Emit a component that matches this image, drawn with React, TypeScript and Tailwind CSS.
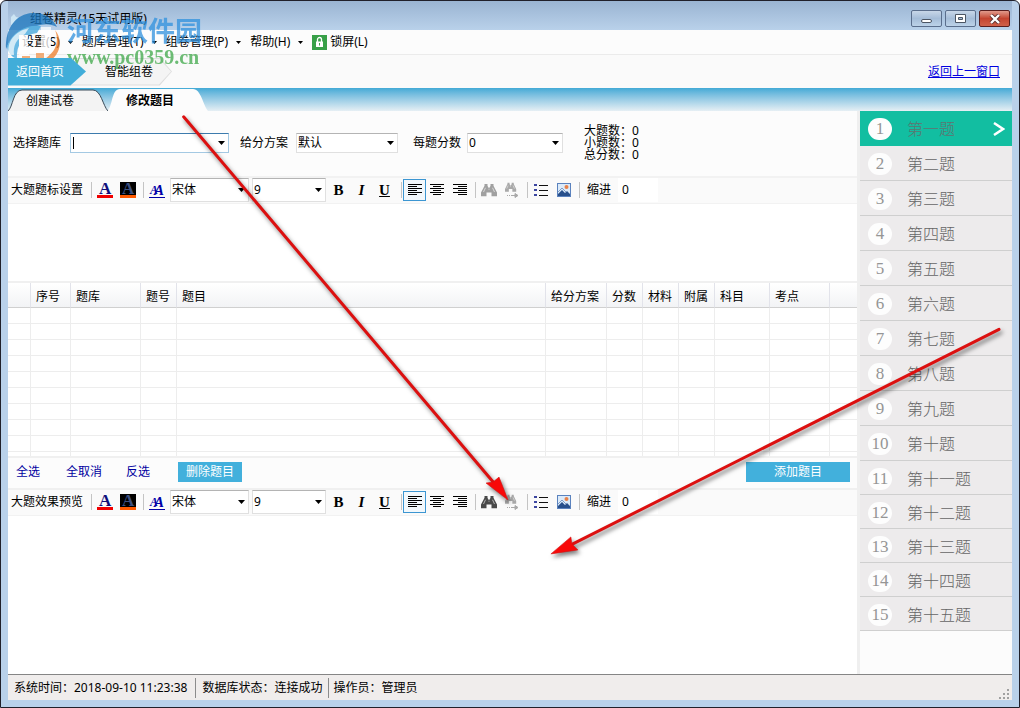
import React, { useState } from "react";

const CHAPTERS = ["一", "二", "三", "四", "五", "六", "七", "八", "九", "十", "十一", "十二", "十三", "十四", "十五"];

const MENUS = ["设置(S)", "题库管理(T)", "组卷管理(P)", "帮助(H)"];

const COLUMNS = [
  { title: "", width: "w-[23px]" },
  { title: "序号", width: "w-10" },
  { title: "题库", width: "w-[70px]" },
  { title: "题号", width: "w-9" },
  { title: "题目", width: "" },
  { title: "给分方案", width: "w-[61px]" },
  { title: "分数", width: "w-9" },
  { title: "材料", width: "w-9" },
  { title: "附属", width: "w-9" },
  { title: "科目", width: "w-[55px]" },
  { title: "考点", width: "w-[60px]" },
  { title: "", width: "w-[27px]" },
];

function Caret({ className = "" }: { className?: string }) {
  return (
    <svg viewBox="0 0 7 4" className={`h-1 w-[7px] shrink-0 ${className}`}>
      <path d="M0 0h7L3.5 4z" fill="#000" />
    </svg>
  );
}

function Dropdown({ label, options, className = "" }: { label: string; options: string[]; className?: string }) {
  return (
    <span className={`relative flex items-center ${className}`}>
      <select
        aria-label={label}
        className="h-full w-full appearance-none border border-t-[#b4b4b4] border-r-[#e0e0e0] border-b-[#e0e0e0] border-l-[#e0e0e0] bg-white pl-px outline-none"
      >
        {options.map((o) => (
          <option key={o}>{o}</option>
        ))}
      </select>
      <Caret className="pointer-events-none absolute right-1" />
    </span>
  );
}

function Separator() {
  return <span className="h-4 w-px bg-[#c4c4c4]" />;
}

function AlignIcon({ rows }: { rows: number[][] }) {
  return (
    <svg viewBox="0 0 14 12" className="h-3 w-3.5" shapeRendering="crispEdges">
      {rows.map(([x, w], i) => (
        <rect key={i} x={x} y={i * 2} width={w} height="1" />
      ))}
    </svg>
  );
}

function Binoculars({ color, next = false }: { color: string; next?: boolean }) {
  return (
    <svg viewBox="0 0 16 16" className="h-4 w-4">
      <g transform={next ? "translate(1 0) scale(.7)" : "translate(0 1) scale(1 .95)"} fill={color}>
        <path d="M3.500 1h3v2l1 2h1l1-2V1h3v2l1.500 3L16 10v4h-5.500v-4h-5v4H0v-4l2-4 1.500-3z" />
        <path d="M2.500 9.500L4.500 5M13.500 9.500L11.500 5M7.500 6.500h1" stroke="#fff" strokeWidth="1" opacity=".6" />
      </g>
      {next && <path d="M3 13.500h1m1 0h1m1 0h6m-2-2 3 2-3 2z" stroke={color} fill={color} />}
    </svg>
  );
}

function FormatToolbar({ label, findColor }: { label: string; findColor: string }) {
  return (
    <div className="flex h-[26px] shrink-0 items-center overflow-hidden border-b border-[#f2f2f2] bg-[#fafafa] pb-0.5 pl-[3px]">
      <span className="mr-2 whitespace-nowrap">{label}</span>
      <Separator />
      <button aria-label="字体颜色" className="ml-[5px] flex h-4 w-4 flex-col items-center border-b-[3px] border-[#f00000]">
        <span className="font-['Liberation_Serif',serif] text-[17px] leading-[13px] font-bold text-[#10107c]">A</span>
      </button>
      <button aria-label="背景颜色" className="mr-[7px] ml-[7px] flex h-4 w-4 flex-col items-center border-b-[3px] border-[#ff5a00] bg-black">
        <span className="font-['Liberation_Serif',serif] text-[17px] leading-[13px] font-bold text-[#3c5080]">A</span>
      </button>
      <Separator />
      <button aria-label="字体" className="mr-[5px] ml-[5px] flex h-4 w-4 items-end justify-center border-b border-[#0000a8] font-['Liberation_Serif',serif] leading-[13px] font-bold text-[#0000a8] italic">
        <span className="text-[12px]">A</span>
        <span className="-ml-1 text-[15px]">A</span>
      </button>
      <Dropdown label="字体名称" options={["宋体", "黑体"]} className="h-6 w-[79px]" />
      <Dropdown label="字号" options={["9", "12"]} className="ml-[3px] h-6 w-[74px]" />
      <div className="mr-[5px] ml-[1px] flex font-['Liberation_Serif',serif] text-[15px] font-bold">
        <button className="w-[23px]">B</button>
        <button className="w-[23px] italic">I</button>
        <button className="w-[23px] underline">U</button>
      </div>
      <Separator />
      <button aria-label="左对齐" className="ml-px flex h-[22px] w-[23px] items-center justify-center border border-[#3c96d2] bg-[#f2f8fc]">
        <AlignIcon rows={[[0, 14], [0, 9], [0, 14], [0, 9], [0, 14], [0, 9]]} />
      </button>
      <button aria-label="居中" className="flex w-[22px] justify-center">
        <AlignIcon rows={[[0, 14], [3, 8], [0, 14], [3, 8], [0, 14], [3, 8]]} />
      </button>
      <button aria-label="右对齐" className="mr-1 flex w-[23px] justify-center">
        <AlignIcon rows={[[0, 14], [5, 9], [0, 14], [5, 9], [0, 14], [5, 9]]} />
      </button>
      <Separator />
      <button aria-label="查找" className="ml-[5px]">
        <Binoculars color={findColor} />
      </button>
      <button aria-label="查找下一个" className="mr-[7px] ml-[7px]">
        <Binoculars color="#a9a9a9" next />
      </button>
      <Separator />
      <button aria-label="项目符号" className="ml-[6px]">
        <svg viewBox="0 0 14 14" className="h-3.5 w-3.5" shapeRendering="crispEdges">
          <path d="M0 1h3v2H0zM0 6h3v2H0zM0 11h3v2H0z" fill="#3c46a0" />
          <path d="M5 2h9v1H5zM5 7h9v1H5zM5 12h9v1H5z" fill="#111" />
        </svg>
      </button>
      <button aria-label="插入图片" className="mr-[8px] ml-[9px]">
        <svg viewBox="0 0 14 14" className="h-3.5 w-3.5">
          <rect x=".5" y=".5" width="13" height="13" fill="#dcebfa" stroke="#5a82be" />
          <path d="M1 11l4-4 3 3 2-2 3 3v2H1z" fill="#28508c" />
          <path d="M1 9l4-4 4 4" fill="none" stroke="#7d9cc8" />
          <circle cx="9.500" cy="4" r="2" fill="#e8824a" />
        </svg>
      </button>
      <Separator />
      <label className="ml-[7px] flex items-center whitespace-nowrap">
        缩进
        <input defaultValue="0" className="ml-[7px] h-6 w-10 bg-white pl-1 outline-none" />
      </label>
    </div>
  );
}

function TitleBar() {
  return (
    <header className="flex h-[29px] shrink-0 items-center bg-linear-to-b from-[#9ab4d2] to-[#b9d1ea] pr-0.5 pl-[22px]">
      <h1 className="mt-1.5 flex-1">组卷精灵(15天试用版)</h1>
      <div className="mt-1.5 flex gap-[3px]">
        <button aria-label="最小化" className="flex h-[17px] w-[31px] items-center justify-center rounded-xs border border-[#5a6e8c] bg-linear-to-b from-[#c8d7e8] via-[#a5bdd8] to-[#bcd2e8]">
          <span className="mt-1 h-1 w-[11px] rounded-xs border border-[#4b5563] bg-white" />
        </button>
        <button aria-label="最大化" className="flex h-[17px] w-[31px] items-center justify-center rounded-xs border border-[#5a6e8c] bg-linear-to-b from-[#c8d7e8] via-[#a5bdd8] to-[#bcd2e8]">
          <svg viewBox="0 0 11 9" className="h-[9px] w-[11px]">
            <path d="M.5.5h10v8H.5zM3.500 3.500h4v2h-4z" fill="#fff" stroke="#4b5563" fillRule="evenodd" />
          </svg>
        </button>
        <button aria-label="关闭" className="flex h-[17px] w-[31px] items-center justify-center rounded-xs border border-[#5a1e1e] bg-linear-to-b from-[#e09a8c] via-[#c44430] to-[#d0614a]">
          <svg viewBox="0 0 12 10" className="h-2.5 w-3">
            <path d="M2 1l8 8M10 1L2 9" stroke="#5a3030" strokeWidth="4" />
            <path d="M2 1l8 8M10 1L2 9" stroke="#fff" strokeWidth="2.400" />
          </svg>
        </button>
      </div>
    </header>
  );
}

function MenuBar() {
  return (
    <nav className="flex h-[25px] shrink-0 items-center border-b border-[#ebebeb] bg-[#fcfcfc] pl-3.5">
      {MENUS.map((m) => (
        <button key={m} className="flex items-center whitespace-nowrap">
          {m}
          <svg viewBox="0 0 5 3" className="mr-[9px] ml-2 h-[3px] w-[5px]">
            <path d="M0 0h5L2.500 3z" />
          </svg>
        </button>
      ))}
      <button className="flex items-center gap-[3px]">
        <svg viewBox="0 0 15 15" className="h-[15px] w-[15px]">
          <path d="M0 0h15v15H0z" fill="#38a048" />
          <path d="M5.500 7V4.500a2 2 0 0 1 4 0V7" fill="none" stroke="#fff" strokeWidth="1.300" />
          <path d="M4 6.500h7V12H4z" fill="#fff" />
          <path d="M7 8h1v2.500H7z" fill="#38a048" />
        </svg>
        锁屏(L)
      </button>
    </nav>
  );
}

function Watermark() {
  return (
    <div className="pointer-events-none absolute top-2 left-1 flex opacity-75">
      <svg viewBox="0 0 56 60" className="h-[60px] w-14">
        <path d="M6 8l3-3 2 3 4 1-3 3 1 4-4-1-3 1z" fill="#d8f0fa" />
        <path d="M1 40C0 18 12 5 27 4c12-1 21 5 25 14-8-4-14-3-20-1C24 20 8 24 1 40z" fill="#1874bc" />
        <path d="M2 37C8 22 22 15 36 17l-4 7C18 26 11 36 12 50 6 48 3 43 2 37z" fill="#3ba5dc" />
        <path d="M4 46c-3-13 6-24 20-27l-4 6C11 30 8 37 9 46z" fill="#fff" opacity=".7" />
        <path d="M14 26h9v13h13V18h10v24L34 52V44H24v12l-10-3z" fill="#fff" />
        <path d="M50 21c9 11 5 27-9 33-5 2-10 3-15 2 11-3 20-9 24-17 3-7 2-13 0-18z" fill="#ee7d28" />
        <path d="M17 47h8v12h-8zM31 44h8v15h-8z" fill="#ee9550" />
      </svg>
      <div className="ml-1.5">
        <p className="mt-1 font-['Noto_Sans_CJK_SC',sans-serif] text-[27px] leading-[34px] font-bold text-[#2f91de]">河东软件园</p>
        <p className="font-['Liberation_Serif',serif] text-[20px] leading-5 font-bold text-[#3ea849]">www.pc0359.cn</p>
      </div>
    </div>
  );
}

function QuestionTable() {
  return (
    <div className="h-[173px] shrink-0 overflow-hidden bg-white">
      <table className="w-full table-fixed border-separate border-spacing-0">
        <thead>
          <tr className="h-[25px] bg-linear-to-b from-white to-[#f2f3f5]">
            {COLUMNS.map((c, i) => (
              <th key={i} className={`border-r border-b border-r-[#e2e3ea] border-b-[#d0d0d0] p-0 pt-[3px] pl-[5px] text-left font-normal whitespace-nowrap last:border-r-0 ${c.width}`}>
                {c.title}
              </th>
            ))}
          </tr>
        </thead>
        <tbody>
          {Array.from({ length: 10 }, (_, r) => (
            <tr key={r} className="h-4">
              {COLUMNS.map((_, i) => (
                <td key={i} className="border-r border-b border-[#ededed] p-0 last:border-r-0" />
              ))}
            </tr>
          ))}
        </tbody>
      </table>
    </div>
  );
}

function Sidebar() {
  const [current, setCurrent] = useState(0);

  return (
    <aside className="w-[155px] shrink-0 border-l-[3px] border-[#efefef] bg-[#fcfcfc]">
      {CHAPTERS.map((c, i) => (
        <button
          key={c}
          onClick={() => setCurrent(i)}
          className={`flex w-full items-center border-b pt-0.5 pl-2 text-[16px] font-light ${i < 10 ? "h-[35px]" : "h-[34px]"} ${
            i === current ? "border-[#12bea1] bg-[#12bea1] text-[#5f7470]" : "border-[#cfcfcf] bg-[#edebec] text-[#666]"
          }`}
        >
          <span className="flex h-[22px] w-6 items-center justify-center rounded-full bg-[#fdfdfd] font-['Liberation_Serif',serif] text-[17px] font-normal text-[#959595]">
            {i + 1}
          </span>
          <span className="ml-[15px] flex-1 text-left">第{c}题</span>
          {i === current && (
            <svg viewBox="0 0 12 14" className="mr-[7px] h-3.5 w-3">
              <path d="M1 1l9 6-9 6" fill="none" stroke="#fff" strokeWidth="2.500" />
            </svg>
          )}
        </button>
      ))}
    </aside>
  );
}

function Arrows() {
  return (
    <svg viewBox="0 0 1020 708" className="pointer-events-none absolute top-0 left-0 w-full drop-shadow-[2px_3px_2px_rgba(0,0,0,0.5)]">
      <g stroke="#dc1010" strokeWidth="3" strokeLinecap="round">
        <path d="M183 116L494 483" />
        <path d="M1000 329L573 544" />
      </g>
      <g fill="#f80808" stroke="#d01414" strokeWidth=".6">
        <path d="M508 500L486 483l7-1 6-5z" />
        <path d="M551 554l20-17 1 7 6 6z" />
      </g>
    </svg>
  );
}

export default function App() {
  return (
    <div className="relative flex min-h-screen flex-col overflow-hidden rounded-t-md border border-[#20202a] bg-[#b9d1ea] px-[7px] pb-[7px] font-['Noto_Sans','Noto_Sans_CJK_SC',sans-serif] text-[12px] leading-4 text-black">
      <TitleBar />
      <MenuBar />

      <div className="flex h-[33px] shrink-0 items-center bg-[#fafafa] pr-3">
        <button className="z-1 h-7 w-[78px] bg-[#41add9] pr-3.5 text-white [clip-path:polygon(0_0,80%_0,100%_50%,80%_100%,0_100%)]">
          返回首页
        </button>
        <button className="-ml-4 h-7 w-[102px] bg-[#dedede] p-px [clip-path:polygon(0_0,88%_0,100%_50%,88%_100%,0_100%)]">
          <span className="flex h-full items-center justify-center bg-[#f4f4f4] pl-4 [clip-path:polygon(0_0,88%_0,100%_50%,88%_100%,0_100%)]">智能组卷</span>
        </button>
        <a href="#" className="ml-auto text-[#0000e0] underline">返回上一窗口</a>
      </div>

      <div role="tablist" className="flex h-[23px] shrink-0 items-end bg-linear-to-b from-[#41aad6] to-[#e6eff4]">
        <button role="tab" className="relative h-[22px] w-[100px] pt-0.5 pr-4">
          <svg viewBox="0 0 100 22" className="absolute inset-0 h-full w-full">
            <path d="M0 22C5 18 5 1 14 1h71c8 0 10 16 15 21" fill="#f3f3f3" stroke="#3a4a58" />
          </svg>
          <span className="relative">创建试卷</span>
        </button>
        <button role="tab" aria-selected="true" className="relative h-[22px] w-[100px] pt-0.5 pr-4 font-bold">
          <svg viewBox="0 0 100 22" className="absolute inset-0 h-full w-full">
            <path d="M-1 22C5 18 3 0 12 0h73c8 0 10 16 15 22z" fill="#fcfcfc" />
          </svg>
          <span className="relative">修改题目</span>
        </button>
      </div>

      <main className="flex flex-1">
        <div className="flex min-w-0 flex-1 flex-col bg-white">
          <section className="flex h-[65px] shrink-0 items-center overflow-hidden bg-[#fcfcfc] pb-0.5 pl-[5px] whitespace-nowrap">
            <label htmlFor="bank" className="mr-[9px]">选择题库</label>
            <span className="relative flex h-5 w-[159px] items-center">
              <input id="bank" className="h-full w-full border border-[#a4c9e3] border-t-[#3d7bad] bg-white pl-1 outline-none" />
              <span className="absolute left-[3px] h-3 w-px bg-black" />
              <Caret className="pointer-events-none absolute right-1" />
            </span>
            <span className="mr-2 ml-[11px]">给分方案</span>
            <Dropdown label="给分方案" options={["默认"]} className="h-5 w-[102px]" />
            <span className="mr-[6px] ml-[15px]">每题分数</span>
            <Dropdown label="每题分数" options={["0", "1"]} className="h-5 w-24" />
            <ul className="ml-[21px] leading-3">
              <li>大题数：0</li>
              <li>小题数：0</li>
              <li>总分数：0</li>
            </ul>
          </section>

          <div className="h-0.5 shrink-0 bg-[#f2f2f2]" />
          <FormatToolbar label="大题题标设置" findColor="#a0a0a0" />
          <textarea aria-label="大题题标" className="block h-[77px] shrink-0 resize-none bg-white outline-none" />
          <div className="h-0.5 shrink-0 bg-[#f0f0f0]" />
          <QuestionTable />

          <div className="flex h-[34px] shrink-0 items-center border-y-2 border-[#f0f0f0] bg-[#fcfcfc] pr-[7px] pb-0.5 pl-2 text-[#0000a0]">
            <button className="mr-[26px]">全选</button>
            <button className="mr-6">全取消</button>
            <button className="mr-7">反选</button>
            <button className="h-5 w-16 bg-[#42b0dc] text-white">删除题目</button>
            <button className="ml-auto h-5 w-[104px] bg-[#42b0dc] text-white">添加题目</button>
          </div>

          <FormatToolbar label="大题效果预览" findColor="#4a4a4a" />
          <textarea aria-label="大题效果" className="block flex-1 resize-none bg-white outline-none" />
        </div>
        <Sidebar />
      </main>

      <footer className="flex h-[26px] shrink-0 items-center border-t border-[#858585] bg-[#f0edec] pl-1.5">
        <span>系统时间：2018-09-10 11:23:38</span>
        <span className="mr-1.5 ml-2 h-5 w-px bg-[#8c8c8c]" />
        <span>数据库状态：连接成功</span>
        <span className="mr-1 ml-1.5 h-5 w-px bg-[#8c8c8c]" />
        <span>操作员：管理员</span>
        <svg viewBox="0 0 11 11" className="mr-0.5 ml-auto h-[11px] w-[11px] self-end" shapeRendering="crispEdges">
          <path d="M8 0h2v2H8zM4 4h2v2H4zM8 4h2v2H8zM0 8h2v2H0zM4 8h2v2H4zM8 8h2v2H8z" fill="#a0a0a0" />
        </svg>
      </footer>

      <Watermark />
      <Arrows />
    </div>
  );
}
